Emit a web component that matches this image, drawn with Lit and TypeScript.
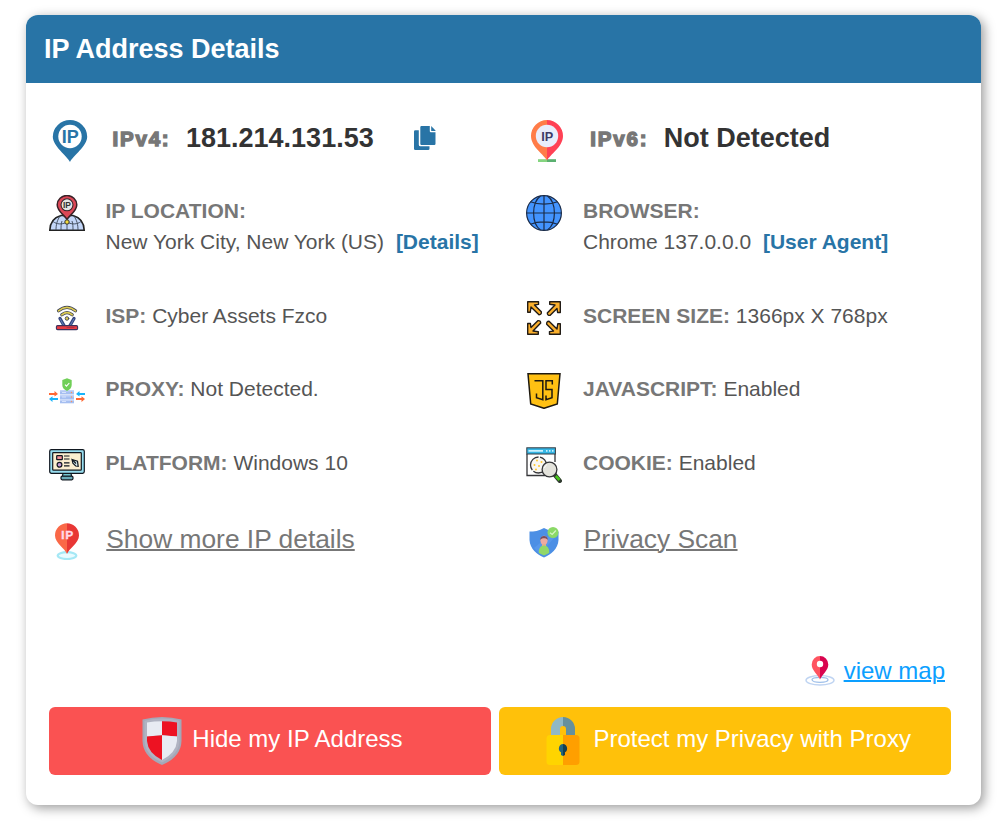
import { LitElement, html, css, svg } from "lit";
import { customElement } from "lit/decorators.js";

const pinBlue = html`<svg width="36" height="42" viewBox="0 0 36 42">
  <path d="M18 42C15 36 .8 26 .8 16.800A17.200 16.800 0 0 1 35.200 16.800C35.200 26 21 36 18 42Z" fill="#2874a6"/>
  <circle cx="18" cy="16.500" r="11.700" fill="#fff"/>
  <text x="18.300" y="22.800" text-anchor="middle" font-size="17.800" font-weight="700" fill="#2874a6" textLength="17" lengthAdjust="spacingAndGlyphs">IP</text>
</svg>`;

const pinRed = html`<svg width="36" height="42" viewBox="0 0 36 42">
  <rect x="9" y="39.200" width="9" height="2.800" fill="#85d580"/><rect x="18" y="39.200" width="9" height="2.800" fill="#5ab070"/>
  <path d="M18 40.500C15.500 35 2 27 2 16A16 16 0 0 1 18 0Z" fill="#ff7c48"/>
  <path d="M18 40.500C20.500 35 34 27 34 16A16 16 0 0 0 18 0Z" fill="#ff4155"/>
  <circle cx="18" cy="16" r="11.200" fill="#e9edfb"/>
  <text x="18.300" y="20.800" text-anchor="middle" font-size="13.500" font-weight="700" fill="#3d3b67" textLength="12" lengthAdjust="spacingAndGlyphs">IP</text>
</svg>`;

const copyIcon = html`<svg width="22" height="24" viewBox="0 0 22 24" fill="#2874a6">
  <path d="M0 5.500A1.300 1.300 0 0 1 1.300 4.200H4.800V18.700A1.600 1.600 0 0 0 6.400 20.300H15.500V22.700A1.300 1.300 0 0 1 14.200 24H1.300A1.300 1.300 0 0 1 0 22.700Z"/>
  <path d="M7.500 0H15.800V5.200A1 1 0 0 0 16.800 6.200H21.500V17.700A1.200 1.200 0 0 1 20.300 18.900H7.500A1.200 1.200 0 0 1 6.300 17.700V1.200A1.200 1.200 0 0 1 7.500 0Z"/>
  <path d="M17.200 0L21.500 4.500V4.900H17.200Z"/>
</svg>`;

const locationIcon = html`<svg width="36" height="36" viewBox="0 0 36 36">
  <path d="M.8 35.200C1 28 5 22.500 12 20.500H24C31 22.500 35 28 35.200 35.200Z" fill="#c3d6f8" stroke="#222" stroke-width="1.600"/>
  <path d="M11.500 20.500C8 25 7 30 7 35M24.500 20.500C28 25 29 30 29 35M13 26C12 29 12 32 12 35M23 26C24 29 24 32 24 35M4 26.500C8 29.500 12 29.500 18 27.500C24 29.500 28 29.500 32 26.500M18 27V35" fill="none" stroke="#3b4656" stroke-width=".9"/>
  <path d="M18 24.500C15.500 20 8.200 16.500 8.200 9.800A9.800 9.300 0 0 1 27.800 9.800C27.800 16.500 20.500 20 18 24.500Z" fill="#dc4757" stroke="#3a2228" stroke-width="1.500"/>
  <circle cx="18" cy="9.800" r="6" fill="#e4e4e4" stroke="#36252a" stroke-width="1.100"/>
  <text x="18" y="12.900" text-anchor="middle" font-size="8.500" font-weight="700" fill="#333" textLength="8" lengthAdjust="spacingAndGlyphs">IP</text>
  <circle cx="18" cy="27" r="2.200" fill="#f4dc3d" stroke="#333" stroke-width="1"/>
</svg>`;

const globeIcon = html`<svg width="36" height="36" viewBox="0 0 36 36" fill="none" stroke="#1b2c49" stroke-width="1.200">
  <circle cx="18" cy="18" r="17.400" fill="#4394ff"/>
  <path d="M18 .6V35.400M.6 18H35.400M4.500 6.800C12 10 24 10 31.500 6.800M4.500 29.200C12 26 24 26 31.500 29.200"/>
  <path d="M14.500 1C9 5 7.600 12 7.600 18S9 31 14.500 35M21.500 1C27 5 28.400 12 28.400 18S27 31 21.500 35"/>
</svg>`;

const ispIcon = html`<svg width="36" height="36" viewBox="0 0 36 36" fill="none" stroke-linecap="round">
  <g stroke="#3f4355" stroke-width="3.200"><path d="M9.500 10.800Q18 4 26.500 10.800M12.800 14.800Q18 10.500 23.200 14.800"/></g>
  <g stroke="#ddcb51" stroke-width="1.700"><path d="M9.500 10.800Q18 4 26.500 10.800M12.800 14.800Q18 10.500 23.200 14.800"/></g>
  <circle cx="18" cy="18.500" r="1.800" fill="#ddcb51" stroke="#3f4355" stroke-width=".9"/>
  <path d="M11 18.500L15 25.500M25 18.500L21 25.500" stroke="#35457f" stroke-width="3.300"/>
  <path d="M11.200 19L14.500 25M24.800 19L21.500 25" stroke="#6688bd" stroke-width=".9"/>
  <rect x="7.400" y="25.600" width="21.200" height="4" rx="1.200" fill="#e93c42" stroke="#3b315c" stroke-width="1.100"/>
  <path d="M18 27.500H25" stroke="#9d2942" stroke-width=".7"/>
</svg>`;

const proxyIcon = html`<svg width="36" height="36" viewBox="0 0 36 36">
  <g fill="#a6bff1"><rect x="11" y="17" width="14" height="4.300"/><rect x="11" y="21.800" width="14" height="4.300"/><rect x="11" y="26.600" width="14" height="3.700"/></g>
  <path d="M11 17H25V18.500H11ZM11 22H25V23.500H11ZM11 26.600H25V28H11Z" fill="#c3d4f8"/>
  <g fill="#ff925b"><circle cx="22.500" cy="19.500" r=".7"/><circle cx="22.500" cy="24" r=".7"/><circle cx="22.500" cy="28.500" r=".7"/></g>
  <path d="M13 19.500H17M13 24H17M13 28.500H17" stroke="#e1ebff" stroke-width=".8"/>
  <path d="M18 5.200L22.700 7V12Q22.700 15.800 18 18Q13.300 15.800 13.300 12V7Z" fill="#70cf57"/>
  <path d="M16 11.600L17.500 13.200L20.300 10" fill="none" stroke="#fff" stroke-width="1.100"/>
  <g fill="#ff6833"><path d="M0 19.900H5.500V18L9 21L5.500 23.500V22H0ZM27 25H32.500V23.300L36 26.100L32.500 29V27.100H27Z"/></g>
  <g fill="#18b4fa"><path d="M9 25H3.500V23.300L0 26.100L3.500 29V27.100H9ZM36 19.900H30.500V18L27 21L30.500 23.500V22H36Z"/></g>
</svg>`;

const cornerArrow = (rotation: number) => svg`<path transform="rotate(${rotation} 18 18)" d="M1.700 1.700H12.500V4.400L8.500 5L15.300 11.800Q15.800 14.500 13 14.700L5 7L4.200 12.300H1.700Z" fill="#fbb02d" stroke="#211b15" stroke-width="1.400" stroke-linejoin="round"/>`;
const screenIcon = html`<svg width="36" height="36" viewBox="0 0 36 36">${[0, 90, 180, 270].map(cornerArrow)}</svg>`;

const scriptIcon = html`<svg width="36" height="36" viewBox="0 0 36 36" stroke="#1e1910" fill="none" stroke-width="1.500">
  <path d="M2 .8H34L31.300 31L18 35.300L4.700 31Z" fill="#ffc013"/>
  <path d="M8.500 7.800H16.800V26.700L10.500 24.600V20.500M26.300 11.500V7.800H20V16.500H26V24.600L20 26.700V22.500"/>
</svg>`;

const platformIcon = html`<svg width="36" height="36" viewBox="0 0 36 36" stroke="#111820" stroke-width="1.200">
  <path d="M14 26H22L22.500 29.500H13.500Z" fill="#77c8d3"/>
  <rect x="12" y="29.200" width="12" height="3.600" rx="1.200" fill="#6aabb8"/>
  <rect x=".7" y="2.600" width="34.600" height="23.700" rx="1.700" fill="#97ddef"/>
  <rect x="3.700" y="5.600" width="28.600" height="17.600" rx=".7" fill="#fbefcf"/>
  <rect x="7.700" y="8.700" width="5.600" height="4" rx=".5" fill="#f59298"/>
  <circle cx="10.500" cy="17.800" r="2.400" fill="#c79ed5"/>
  <path d="M15 9H20.500M15 12H20.500M15 15.800H20.500M15 18.800H20.500" fill="none"/>
  <path d="M23 12.500L28.500 14.300L29.200 19.300L26.700 19L23.900 16.300Z" fill="#d9eef0"/><path d="M23.500 13L27 16.500" fill="none"/>
</svg>`;

const cookieIcon = html`<svg width="36" height="36" viewBox="0 0 36 36">
  <path d="M1 7V28.500H19M29 7V15" fill="none" stroke="#353538" stroke-width="1.300"/>
  <rect x=".8" y=".8" width="28.600" height="6.200" fill="#35b6e5" stroke="#333b42" stroke-width="1"/>
  <path d="M2.500 3.800H17M20 3.800H21.500M23 3.800H24.500M26 3.800H27.500" stroke="#c7f1ff" stroke-width="1.700"/>
  <circle cx="12.500" cy="18" r="8" fill="#f9f7f2" stroke="#353538" stroke-width="1.300" stroke-dasharray="18 1.500"/>
  <g fill="#ffc62c"><circle cx="11" cy="13.500" r="1"/><circle cx="15.500" cy="15" r="1"/><circle cx="8.500" cy="18" r="1"/><circle cx="13" cy="19" r="1"/><circle cx="10" cy="22.500" r="1"/></g>
  <path d="M28.500 27.500L33.800 33.800" stroke="#303a30" stroke-width="4.400" stroke-linecap="round"/>
  <path d="M29.800 29L33.500 33" stroke="#48c51c" stroke-width="2.600"/>
  <circle cx="23.500" cy="22.500" r="7.400" fill="#e4e3dc" stroke="#353538" stroke-width="1.300"/>
  <path d="M18.500 21A5 5 0 0 1 21 17.500" stroke="#fff" fill="none"/>
</svg>`;

const moreIcon = html`<svg width="36" height="37" viewBox="0 0 36 37">
  <ellipse cx="18" cy="32.600" rx="9.300" ry="3.400" fill="#e9fbff" stroke="#a5e8f5" stroke-width="2.200"/>
  <path d="M18 31C16 25.500 6 20 6 12.500A12 12.300 0 0 1 18 .2Z" fill="#fa6847"/>
  <path d="M18 31C20 25.500 30 20 30 12.500A12 12.300 0 0 0 18 .2Z" fill="#e83735"/>
  <text x="18.200" y="16.400" text-anchor="middle" font-size="11.500" font-weight="700" fill="#ffdce9" stroke="#ffdce9" stroke-width=".4" textLength="12">IP</text>
</svg>`;

const scanIcon = html`<svg width="36" height="36" viewBox="0 0 36 36">
  <path d="M18 5C13 8 8 8.500 3.500 8.500V17C4 26 11 31.500 18 34.500C25 31.500 32 26 32.500 17V8.500C28 8.500 23 8 18 5Z" fill="#4c8fe5"/>
  <path d="M9 12L26 28M26 10L29 14L14 31L8 25Z" fill="#5797eb"/>
  <ellipse cx="18" cy="17.500" rx="3.600" ry="4.700" fill="#eeaaa0"/><path d="M14.200 17C13.800 11.500 22.200 11.500 21.800 17C20.500 14.800 15.500 14.800 14.200 17Z" fill="#784e5d"/>
  <path d="M16 21H20V24H16Z" fill="#e7aa8a"/>
  <path d="M12.800 30Q12.500 22.500 18 22.500Q23.500 22.500 23.200 30L18 32.500Z" fill="#91d769"/>
  <circle cx="27" cy="9.500" r="5.500" fill="#8bd967"/><path d="M24 9.700L26.200 11.400L29.900 7.500" fill="none" stroke="#d6f5c5" stroke-width="1.300"/>
</svg>`;

const mapIcon = html`<svg width="30" height="30" viewBox="0 0 30 30">
  <ellipse cx="15" cy="24.300" rx="14" ry="4.700" fill="#fff" stroke="#bfd4f2" stroke-width="1.400"/>
  <ellipse cx="15" cy="23.800" rx="8" ry="2.500" fill="none" stroke="#9fc0ea" stroke-width="1.300"/>
  <path d="M15 23.500C13 18.500 6.700 14.500 6.700 8.500A8.300 8.500 0 0 1 15 0Z" fill="#ff5360"/>
  <path d="M15 23.500C17 18.500 23.300 14.500 23.300 8.500A8.300 8.500 0 0 0 15 0Z" fill="#d9044f"/>
  <circle cx="15" cy="8" r="3.200" fill="#fff"/>
</svg>`;

const shieldIcon = html`<svg width="40" height="48" viewBox="0 0 40 48">
  <path d="M20 0Q30 0 39.500 2.500V24Q39 40 20 48Q1 40 .5 24V2.500Q10 0 20 0Z" fill="#a4a8b8"/>
  <path d="M20 1.500Q29 1.500 37.500 3.800V24Q37 37.500 20 45.500Q3 37.500 2.500 24V3.800Q11 1.500 20 1.500Z" fill="#b0b3c2"/>
  <path d="M20 4.200Q12 4.300 5 5.500V19.500L20 18.300Z" fill="#e8ebf3"/><path d="M20 4.200Q28 4.300 35 5.500V19.500L20 18.300Z" fill="#ed1222"/>
  <path d="M20 18.300L5 19.500V24Q6 36 20 43Z" fill="#ed1222"/><path d="M20 18.300L35 19.500V24Q34 36 20 43Z" fill="#e8ebf3"/>
</svg>`;

const lockIcon = html`<svg width="34" height="48" viewBox="0 0 34 48">
  <path d="M17 0A12 12 0 0 0 5 12V19H14V12Q14 9 17 9Z" fill="#90b8c5"/><path d="M17 0A12 12 0 0 1 29 12V19H20V12Q20 9 17 9Z" fill="#66909c"/>
  <path d="M17 18H4Q.5 18 .5 21.500V44.500Q.5 48 4 48H17Z" fill="#ffd400"/><path d="M17 18H30Q33.500 18 33.500 21.500V44.500Q33.500 48 30 48H17Z" fill="#ff9f00"/>
  <path d="M17 27A4.500 4.500 0 0 0 15 35.300V38L17 39Z" fill="#24647d"/><path d="M17 27A4.500 4.500 0 0 1 19 35.300V38L17 39Z" fill="#183f50"/>
</svg>`;

@customElement("app-root")
export class AppRoot extends LitElement {
  static styles = css`
    :host { display: block; box-sizing: border-box; height: 822px; padding: 15px 27px 17px 26px; overflow: hidden; background: #fff; color: #555; font: 21px/31px "Liberation Sans", Arial, sans-serif; white-space: nowrap; }
    * { box-sizing: border-box; }
    svg { display: block; flex: none; }
    .card { height: 790px; border-radius: 12px; background: #fff; box-shadow: 3px 3px 12px rgba(0, 0, 0, 0.4); overflow: hidden; }
    header { height: 68px; padding-left: 18px; background: #2874a6; color: #fff; font-size: 27px; font-weight: 700; line-height: 69px; }
    .grid { display: grid; grid-template-columns: 477px 478px; grid-template-rows: 75px 105px 73px 74px 76px 133px; padding: 37px 0 0 23px; margin-right: -23px; }
    .row { display: flex; align-items: flex-start; gap: 20.500px; }
    .row:nth-child(even) { gap: 21px; }
    .ip { gap: 0; padding-left: 3px; }
    .ip:nth-child(even) { gap: 0; }
    .ip .label { width: 73.500px; margin-left: 24.500px; color: #777; font-size: 20.500px; font-weight: 700; line-height: 37.500px; letter-spacing: 1.800px; -webkit-text-stroke: 1.400px #777; }
    .ip:nth-child(even) .label { margin-left: 25.300px; }
    .ip .value { color: #333; font-weight: 700; font-size: 27px; line-height: 36px; }
    .copy { margin: 6px 0 0 40.500px; }
    b { color: #777; }
    .link { color: #2874a6; font-weight: 700; margin-left: 6px; text-decoration: none; }
    .more { margin-left: 0.800px; color: #777; font-size: 26.350px; line-height: 32px; text-decoration: underline; text-decoration-thickness: 2px; }
    .map { display: flex; justify-content: flex-end; gap: 9px; height: 51px; padding-right: 36px; }
    .map a { color: #0c9fff; font-size: 24px; line-height: 30px; text-decoration: underline; text-decoration-thickness: 2px; }
    .actions { display: grid; grid-template-columns: 442px 452px; gap: 8px; padding-left: 23px; }
    .button { display: flex; height: 68px; padding-top: 10px; border-radius: 6px; color: #fff; font-size: 24px; line-height: 44px; text-decoration: none; }
    .hide { background: #fa5252; padding-left: 93px; gap: 10.300px; }
    .protect { background: #ffc10a; padding-left: 47px; gap: 13.500px; }
  `;

  render() {
    return html`<section class="card">
      <header>IP Address Details</header>
      <div class="grid">
        <div class="row ip">${pinBlue}<span class="label">IPv4:</span><span class="value">181.214.131.53</span><span class="copy">${copyIcon}</span></div>
        <div class="row ip">${pinRed}<span class="label">IPv6:</span><span class="value">Not Detected</span></div>
        <div class="row">${locationIcon}<div><b>IP LOCATION:</b><br>New York City, New York (US) <a class="link">[Details]</a></div></div>
        <div class="row">${globeIcon}<div><b>BROWSER:</b><br>Chrome 137.0.0.0 <a class="link">[User Agent]</a></div></div>
        <div class="row">${ispIcon}<div><b>ISP:</b> Cyber Assets Fzco</div></div>
        <div class="row">${screenIcon}<div><b>SCREEN SIZE:</b> 1366px X 768px</div></div>
        <div class="row">${proxyIcon}<div><b>PROXY:</b> Not Detected.</div></div>
        <div class="row">${scriptIcon}<div><b>JAVASCRIPT:</b> Enabled</div></div>
        <div class="row">${platformIcon}<div><b>PLATFORM:</b> Windows 10</div></div>
        <div class="row">${cookieIcon}<div><b>COOKIE:</b> Enabled</div></div>
        <div class="row">${moreIcon}<a class="more">Show more IP details</a></div>
        <div class="row">${scanIcon}<a class="more">Privacy Scan</a></div>
      </div>
      <div class="map">${mapIcon}<a>view map</a></div>
      <div class="actions">
        <a class="button hide">${shieldIcon}Hide my IP Address</a>
        <a class="button protect">${lockIcon}Protect my Privacy with Proxy</a>
      </div>
    </section>`;
  }
}
